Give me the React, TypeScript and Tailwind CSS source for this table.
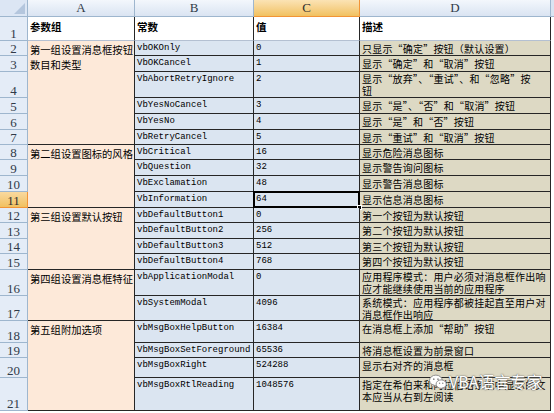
import React from "react";

// one line of the sheet: row number, constant, value and description lines
type Row = {
  n: number;
  b: string;
  c: string;
  d: string[];
  group?: { span: string; lines: string[] };
};

const CJK = "font-['Noto_Sans_CJK_SC',sans-serif]";
const MONO = "font-['Liberation_Mono','Noto_Sans_CJK_SC',monospace]";
const HEAD_FONT = "font-['Liberation_Serif',serif]";

const rows: Row[] = [
  {
    n: 2,
    b: "vbOKOnly",
    c: "0",
    d: ["只显示“确定”按钮（默认设置）"],
    group: { span: "row-span-6", lines: ["第一组设置消息框按钮", "数目和类型"] },
  },
  { n: 3, b: "VbOKCancel", c: "1", d: ["显示“确定”和“取消”按钮"] },
  { n: 4, b: "VbAbortRetryIgnore", c: "2", d: ["显示“放弃”、“重试”、和“忽略”按", "钮"] },
  { n: 5, b: "VbYesNoCancel", c: "3", d: ["显示“是”、“否”和“取消”按钮"] },
  { n: 6, b: "VbYesNo", c: "4", d: ["显示“是”和“否”按钮"] },
  { n: 7, b: "VbRetryCancel", c: "5", d: ["显示“重试”和“取消”按钮"] },
  {
    n: 8,
    b: "VbCritical",
    c: "16",
    d: ["显示危险消息图标"],
    group: { span: "row-span-4", lines: ["第二组设置图标的风格"] },
  },
  { n: 9, b: "VbQuestion", c: "32", d: ["显示警告询问图标"] },
  { n: 10, b: "VbExclamation", c: "48", d: ["显示警告消息图标"] },
  { n: 11, b: "VbInformation", c: "64", d: ["显示信息消息图标"] },
  {
    n: 12,
    b: "vbDefaultButton1",
    c: "0",
    d: ["第一个按钮为默认按钮"],
    group: { span: "row-span-4", lines: ["第三组设置默认按钮"] },
  },
  { n: 13, b: "vbDefaultButton2", c: "256", d: ["第二个按钮为默认按钮"] },
  { n: 14, b: "vbDefaultButton3", c: "512", d: ["第三个按钮为默认按钮"] },
  { n: 15, b: "vbDefaultButton4", c: "768", d: ["第四个按钮为默认按钮"] },
  {
    n: 16,
    b: "vbApplicationModal",
    c: "0",
    d: ["应用程序模式：用户必须对消息框作出响", "应才能继续使用当前的应用程序"],
    group: { span: "row-span-2", lines: ["第四组设置消息框特征"] },
  },
  { n: 17, b: "vbSystemModal", c: "4096", d: ["系统模式：应用程序都被挂起直至用户对", "消息框作出响应"] },
  {
    n: 18,
    b: "vbMsgBoxHelpButton",
    c: "16384",
    d: ["在消息框上添加“帮助”按钮"],
    group: { span: "row-span-4", lines: ["第五组附加选项"] },
  },
  { n: 19, b: "VbMsgBoxSetForeground", c: "65536", d: ["将消息框设置为前景窗口"] },
  { n: 20, b: "vbMsgBoxRight", c: "524288", d: ["显示右对齐的消息框"] },
  { n: 21, b: "vbMsgBoxRtlReading", c: "1048576", d: ["指定在希伯来和阿拉伯语系统中显示的文", "本应当从右到左阅读"] },
];

const ACTIVE_ROW = 11;

const WeChatIcon = () => (
  <svg width="18" height="16" viewBox="0 0 17 15">
    <ellipse cx="6.5" cy="6" rx="6" ry="5" fill="#fff" stroke="#8a8a8a" strokeWidth="0.9" />
    <path d="M3 9.8 L2.4 12.2 L5.2 10.7 Z" fill="#fff" stroke="#8a8a8a" strokeWidth="0.8" />
    <circle cx="4.5" cy="4.8" r="0.8" fill="#8a8a8a" />
    <circle cx="8.5" cy="4.8" r="0.8" fill="#8a8a8a" />
    <ellipse cx="11.5" cy="9.5" rx="4.8" ry="4" fill="#fff" stroke="#8a8a8a" strokeWidth="0.9" />
    <path d="M14 12.8 L14.8 14.6 L12.6 13.3 Z" fill="#fff" stroke="#8a8a8a" strokeWidth="0.8" />
    <circle cx="10" cy="8.7" r="0.7" fill="#8a8a8a" />
    <circle cx="13" cy="8.7" r="0.7" fill="#8a8a8a" />
  </svg>
);

const RowNum = ({ n }: { n: number }) => (
  <div
    className={
      n === ACTIVE_ROW
        ? `flex items-end justify-center border-r border-b border-[#F29436] bg-linear-to-b from-[#F9D99F] to-[#F1C15F] text-[13px] leading-[13px] text-[#303030] ${HEAD_FONT}`
        : `flex items-end justify-center border-r border-b border-[#9EB6CE] bg-[#E4ECF7] text-[13px] leading-[13px] text-[#303a48] ${HEAD_FONT}`
    }
  >
    {n}
  </div>
);

export default function App() {
  return (
    <div className="h-[413px] w-[554px] overflow-hidden bg-white">
      <div className="relative grid grid-cols-[28px_107px_119px_106px_191px_3px] grid-rows-[17px_24px_15px_16px_26px_16px_16px_15px_15px_16px_16px_16px_15px_16px_15px_16px_26px_25px_22px_15px_20px_33px]">
        {/* column header bar */}
        <div className="flex items-end justify-end border-r border-b border-[#9EB6CE] bg-[#DCE6F4] p-[2px]">
          <svg width="11" height="11" viewBox="0 0 11 11">
            <path d="M11 0 L11 11 L0 11 Z" fill="#B4C6DD" />
          </svg>
        </div>
        {["A", "B", "C", "D"].map((l) => (
          <div
            key={l}
            className={
              l === "C"
                ? `flex items-center justify-center border-r border-b border-[#F29436] bg-linear-to-b from-[#FBE3B4] to-[#F1C15F] text-[13px] text-[#303030] ${HEAD_FONT}`
                : `flex items-center justify-center border-r border-b border-[#9EB6CE] bg-linear-to-b from-[#F3F7FC] to-[#DAE4F2] text-[13px] text-[#303a48] ${HEAD_FONT}`
            }
          >
            {l}
          </div>
        ))}
        <div className="border-b border-[#9EB6CE] bg-[#DAE4F2]" />

        {/* row 1: titles */}
        <RowNum n={1} />
        {["参数组", "常数", "值", "描述"].map((t) => (
          <div
            key={t}
            className={`border-r border-b border-r-[#262626] border-b-[#B4C0D2] bg-white px-[2px] pt-[3px] text-[10.5px] leading-[14px] font-bold text-black ${CJK}`}
          >
            {t}
          </div>
        ))}
        <div className="bg-white" />

        {rows.map((r) => (
          <React.Fragment key={r.n}>
            <RowNum n={r.n} />
            {r.group && (
              <div
                className={`${r.group.span} overflow-hidden border-r border-b border-[#262626] bg-[#FDE9D9] px-[2px] pt-[1px] text-[10.3px] leading-[15px] whitespace-nowrap text-black ${CJK}`}
              >
                {r.group.lines.map((l) => (
                  <div key={l}>{l}</div>
                ))}
              </div>
            )}
            <div
              className={`border-r border-b border-[#262626] bg-[#DBE5F1] px-[2px] pt-[1px] text-[9px] leading-[13px] whitespace-nowrap text-black ${MONO}`}
            >
              {r.b}
            </div>
            <div
              className={`relative border-r border-b border-[#262626] bg-[#DBE5F1] px-[2px] pt-[1px] text-[9px] leading-[13px] whitespace-nowrap text-black ${MONO}`}
            >
              {r.c}
              {r.n === ACTIVE_ROW && (
                <>
                  <div className="absolute -top-[1px] -left-[1px] -right-[1px] -bottom-[1px] border-2 border-black" />
                  <div className="absolute -right-[3px] -bottom-[3px] h-[5px] w-[5px] border border-white bg-black" />
                </>
              )}
            </div>
            <div
              className={
                r.d.length > 1
                  ? `overflow-hidden border-r border-b border-[#262626] bg-[#DDD9C4] px-[2px] pt-[1px] text-[10px] leading-[12px] tracking-[0.2px] whitespace-nowrap text-black ${CJK}`
                  : `overflow-hidden border-r border-b border-[#262626] bg-[#DDD9C4] px-[2px] pt-[1px] text-[10px] leading-[13px] tracking-[0.2px] whitespace-nowrap text-black ${CJK}`
              }
            >
              {r.d.map((l) => (
                <div key={l}>{l}</div>
              ))}
            </div>
            <div className="bg-white" />
          </React.Fragment>
        ))}

        {/* blog watermark laid over the last row */}
        <div className="absolute top-[372px] left-[429px] flex items-center gap-[2px]">
          <WeChatIcon />
          <span
            className={`text-[16px] leading-[19px] text-white [text-shadow:0_0_1px_#555,0_0_2px_#777] ${CJK}`}
          >
            VBA语言专家
          </span>
        </div>
      </div>
    </div>
  );
}
